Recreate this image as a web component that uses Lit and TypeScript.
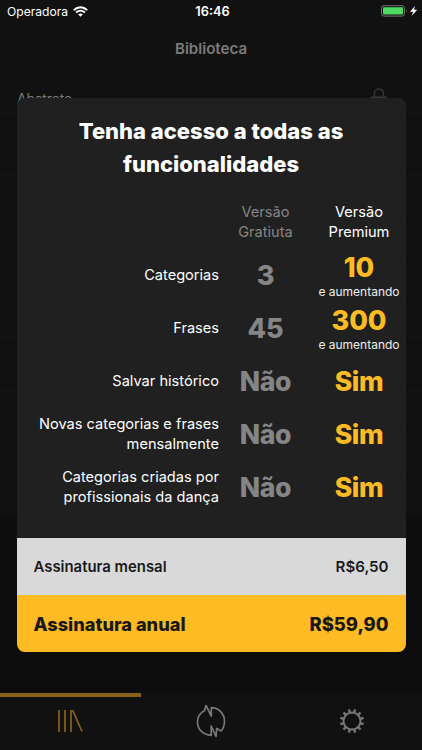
import { LitElement, html, css, svg } from "lit";
import { customElement } from "lit/decorators.js";

const features = [
  { label: ["Categorias"], free: "3", premium: "10", note: "e aumentando" },
  { label: ["Frases"], free: "45", premium: "300", note: "e aumentando" },
  { label: ["Salvar histórico"], free: "Não", premium: "Sim", note: "" },
  { label: ["Novas categorias e frases", "mensalmente"], free: "Não", premium: "Sim", note: "" },
  { label: ["Categorias criadas por", "profissionais da dança"], free: "Não", premium: "Sim", note: "" },
];
const rowHeights = [50, 50, 50, 42, 41, 42, 42, 42, 50, 40];
const teeth = Array.from({ length: 12 }, (_, i) => i * 30 + 15);

@customElement("app-root")
export class AppRoot extends LitElement {
  static styles = css`
    :host { display: block; width: 422px; height: 750px; font-family: Inter, "Liberation Sans", sans-serif; color: #fff; }
    * { box-sizing: border-box; }
    .screen { position: relative; width: 422px; height: 750px; overflow: hidden; background: #0d0d0d; display: flex; flex-direction: column; }
    .status { height: 22px; background: #111; display: grid; grid-template-columns: 1fr auto 1fr; align-items: center; padding: 0 4px 0 7px; font-size: 12.1px; }
    .carrier { display: flex; align-items: center; gap: 5px; }
    .time { font-weight: 600; font-size: 12.8px; }
    .power { display: flex; justify-content: flex-end; }
    .title { height: 54px; background: #111; color: #7b7b7b; font-weight: 600; font-size: 15.1px; text-align: center; line-height: 54px; }
    .list { height: 617px; flex: 1; }
    .item { background: #111; border-bottom: 1px solid #0d0d0d; padding: 0 35px 0 17px; display: flex; justify-content: space-between; align-items: center; color: #7b7b7b; font-size: 13.8px; }
    .name { padding-top: 3px; }
    .lock { margin-top: 1px; }
    .tabs { height: 57px; background: #111; display: grid; grid-template-columns: repeat(3, 1fr); }
    .tab { display: flex; justify-content: center; align-items: center; border-top: 4px solid transparent; padding-bottom: 5px; color: #777; }
    .tab.active { border-color: #8a611a; color: #8a611a; }
    .modal { position: absolute; left: 16.5px; top: 98px; width: 389px; height: 554px; border-radius: 8px; overflow: hidden; background: #202020; display: flex; flex-direction: column; }
    h1 { margin: 17px 0 0; font-size: 22px; line-height: 32.5px; font-weight: 800; text-align: center; white-space: nowrap; }
    .table { flex: 1; margin-top: 21px; display: grid; grid-template-columns: 202.5px 93px 94px; grid-template-rows: 47px repeat(5, 53px); }
    .head { font-size: 14.6px; line-height: 20px; text-align: center; padding-top: 1px; }
    .free { color: #858585; }
    .label { font-size: 14.6px; line-height: 20px; text-align: right; align-self: center; white-space: nowrap; }
    .value { display: flex; flex-direction: column; align-items: center; justify-content: center; padding-top: 2px; font-size: 27px; line-height: 32px; font-weight: 800; }
    .value.word { padding-top: 0; font-size: 26.6px; letter-spacing: -0.4px; }
    .premium { color: #ffbb24; }
    .value.premium:not(.word) { padding-top: 3px; }
    .note { color: #eee; font-size: 12px; font-weight: 400; line-height: 16px; white-space: nowrap; }
    .plan { height: 57px; flex: none; display: flex; justify-content: space-between; align-items: center; padding: 0 17px; color: #191919; }
    .monthly { background: #d9d9d9; font-size: 14.9px; font-weight: 600; }
    .monthly .price { font-size: 15.1px; }
    .yearly { background: #ffbb24; font-size: 18.2px; font-weight: 800; }
    .yearly .price { font-size: 18.4px; }
    svg { display: block; }
  `;

  render() {
    return html`<div class="screen">
      <div class="status">
        <div class="carrier"><span>Operadora</span>
          <svg width="15" height="11" viewBox="0 0 15 11" fill="none" stroke="#fff" stroke-width="2"><path d="M.8 4.1C4.7.2 10.3.2 14.2 4.1M3.1 6.5c2.6-2.5 6.2-2.5 8.8 0"/><path d="M5.1 8.3q2.4-1.8 4.8 0L7.5 10.8Z" fill="#fff" stroke="none"/></svg>
        </div>
        <div class="time">16:46</div>
        <div class="power"><svg width="37" height="12" viewBox="0 0 37 12"><rect x=".5" y=".7" width="23" height="10.4" rx="2.5" fill="none" stroke="#777"/><rect x="2" y="2.2" width="20" height="7.4" rx="1" fill="#4cd964"/><path d="M25 4q1.5 2 0 4Z" fill="#777"/><path d="m34 1-5 5.800h3.200L30.600 11l5.600-6.300H33Z" fill="#fff"/></svg></div>
      </div>
      <div class="title">Biblioteca</div>
      <div class="list">${rowHeights.map((h, i) => html`<div class="item" style="height:${h - (i === 0 ? 7 : 0)}px">
        ${i === 0 ? html`<span class="name">Abstrato</span><svg class="lock" width="16" height="20" viewBox="0 0 16 20" fill="none" stroke="#383838" stroke-width="1.4"><path d="M3.500 9V5.500a4.500 4.500 0 0 1 9 0V9M.500 9.200h15v9H.500Z"/></svg>` : ""}
      </div>`)}</div>
      <div class="tabs">
        <div class="tab active"><svg width="26" height="24" viewBox="0 0 26 24" fill="none" stroke="currentColor" stroke-width="1.7"><path d="M2 1v22M8 1v22M14 1v22M14.500 2h1.500l9 20.5"/></svg></div>
        <div class="tab"><svg width="32" height="34" viewBox="0 0 32 34" fill="none" stroke="currentColor" stroke-width="1.7" stroke-linejoin="round"><path d="M9.500 6.800L11 1.500L16.300 12V3.700C23.500 3.700 29.500 9.500 29.500 17C29.500 21 28.500 24.500 26 27L21.700 24.500L21 32.500L16.200 22V31.300C8.500 31.300 2.500 25.500 2.500 18C2.500 13 5 9 9.500 6.800Z"/></svg></div>
        <div class="tab"><svg width="26" height="26" viewBox="0 0 26 26" fill="none" stroke="currentColor" stroke-width="1.900"><circle cx="13" cy="13" r="8.500"/>${teeth.map((a) => svg`<path stroke-width="2.400" transform="rotate(${a} 13 13)" d="M13 4.200V1"/>`)}</svg></div>
      </div>
      <section class="modal">
        <h1>Tenha acesso a todas as<br>funcionalidades</h1>
        <div class="table">
          <div></div><div class="head free">Versão<br>Gratiuta</div><div class="head">Versão<br>Premium</div>
          ${features.map((f) => html`<div class="label">${f.label.map((t) => html`<div>${t}</div>`)}</div>
            <div class="value free ${f.note ? "" : "word"}">${f.free}</div>
            <div class="value premium ${f.note ? "" : "word"}">${f.premium}${f.note ? html`<span class="note">${f.note}</span>` : ""}</div>`)}
        </div>
        <div class="plan monthly"><span>Assinatura mensal</span><span class="price">R$6,50</span></div>
        <div class="plan yearly"><span>Assinatura anual</span><span class="price">R$59,90</span></div>
      </section>
    </div>`;
  }
}
